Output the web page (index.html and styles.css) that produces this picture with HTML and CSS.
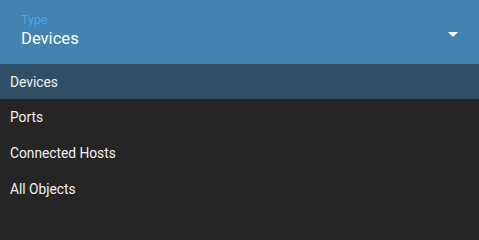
FILE: index.html
```html
<!DOCTYPE html>
<html>
<head>
<meta charset="utf-8">
<link rel="stylesheet" href="styles.css">
</head>
<body>
<div class="select">
  <div class="field">
    <div class="texts">
      <div class="label">Type</div>
      <div class="value">Devices</div>
    </div>
    <svg class="arrow" width="10" height="5" viewBox="0 0 10 5"><path d="M0 0 L10 0 L5 5 Z" fill="#ffffff"/></svg>
  </div>
  <ul class="menu">
    <li class="item selected">Devices</li>
    <li class="item">Ports</li>
    <li class="item">Connected Hosts</li>
    <li class="item">All Objects</li>
  </ul>
</div>
</body>
</html>
```
FILE: styles.css
```css
html, body {
  margin: 0;
  padding: 0;
  background: #252525;
  font-family: Roboto, "Noto Sans", sans-serif;
  overflow: hidden;
  height: 207px;
}
.select {
  width: 479px;
}
.field {
  height: 64px;
  background: #4283b0;
  display: flex;
  align-items: center;
  justify-content: space-between;
  padding: 0 21px 0 21px;
  box-sizing: border-box;
}
.texts {
  display: flex;
  flex-direction: column;
  margin-top: -2px;
}
.label {
  font-size: 12.5px;
  line-height: 14px;
  color: #42a5f5;
}
.value {
  font-size: 16.6px;
  line-height: 22px;
  color: #ffffff;
  margin-top: 1px;
}
.arrow {
  display: block;
  margin-top: 5px;
}
.menu {
  list-style: none;
  margin: 0;
  padding: 0;
  background: #252525;
}
.item {
  height: 36px;
  display: flex;
  align-items: center;
  padding-left: 10px;
  font-size: 13.75px;
  color: #f0f0f0;
}
.item.selected {
  background: #2f4f66;
  height: 35px;
}
```
